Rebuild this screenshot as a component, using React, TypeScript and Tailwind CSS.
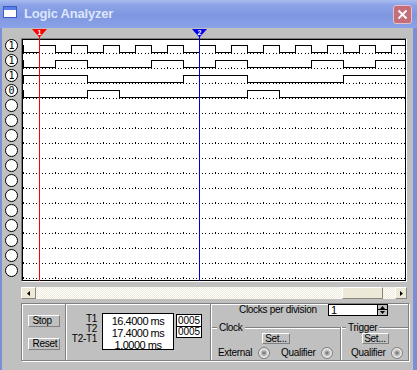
import React from "react";

// high intervals per active channel, in page x (interior runs 23..405)
const HIGHS: [number, number][][] = [
  Array.from({ length: 12 }, (_, k) => [39 + 32 * k, Math.min(55 + 32 * k, 405)] as [number, number]),
  [[55, 87], [151, 183], [215, 247], [311, 343], [375, 405]],
  [[23, 87], [183, 247], [343, 405]],
  [[87, 119], [247, 279]],
];

const VALUES = ["1", "1", "1", "0"];

const L = 23;
const R = 405;

function Trace({ row, highs }: { row: number; highs: [number, number][] }) {
  const hy = 5 + row * 15;
  const ly = 12 + row * 15;
  const lows: [number, number][] = [];
  let x = L;
  for (const [a, b] of highs) {
    if (a > x) lows.push([x, a]);
    x = b;
  }
  if (x < R) lows.push([x, R]);
  const edges = highs.flatMap(([a, b]) => [a, b]).filter((e) => e > L && e < R);

  return (
    <g fill="#000">
      <rect x={0} y={hy} width={1} height={ly - hy + 1} />
      {highs.map(([a, b], i) => (
        <rect key={"h" + i} x={a - L} y={hy} width={b - a + 1} height={1} />
      ))}
      {lows.map(([a, b], i) => (
        <rect key={"l" + i} x={a - L} y={ly} width={b - a + 1} height={1} />
      ))}
      {edges.map((e, i) => (
        <rect key={"e" + i} x={e - L} y={hy} width={1} height={ly - hy + 1} />
      ))}
    </g>
  );
}

function Marker({ color, label }: { color: string; label: string }) {
  return (
    <svg width="15" height="9" viewBox="0 0 15 9">
      <polygon points="0,0 15,0 7.5,8.5" fill={color} />
      <text x="7.5" y="6" textAnchor="middle" fontSize="7" fontWeight="bold" fill="#fff" fontFamily="Liberation Sans, Arial, sans-serif">
        {label}
      </text>
    </svg>
  );
}

function Radio() {
  return (
    <svg width="12" height="12" viewBox="0 0 12 12" className="shrink-0">
      <circle cx="6" cy="6" r="5.5" fill="#c0c0c0" stroke="#808080" />
      <circle cx="6" cy="6" r="4.2" fill="#c0c0c0" stroke="#ffffff" />
      <circle cx="6" cy="6" r="1.8" fill="#808080" />
    </svg>
  );
}

function Btn({ children, className }: { children: React.ReactNode; className: string }) {
  return (
    <div
      className={
        "flex items-center whitespace-nowrap bg-[#c0c0c0] border border-t-white border-l-white border-r-[#808080] border-b-[#808080] text-[10px] leading-none text-black " +
        className
      }
    >
      {children}
    </div>
  );
}

function TitleBar() {
  return (
    <div className="h-[28px] flex items-center bg-[linear-gradient(to_bottom,#aabcf0_0%,#8ca3e7_18%,#7e97e0_55%,#8aa2e7_100%)]">
      <svg width="14" height="12" viewBox="0 0 14 12" className="ml-[3px] self-start mt-[6px]">
        <rect x="0.5" y="0.5" width="13" height="11" fill="#fff" stroke="#3b5cc4" />
        <rect x="1" y="1" width="12" height="3" fill="#5a7fe6" />
      </svg>
      <span className="ml-[7px] text-[13px] font-bold text-[#dde6fb] tracking-[-0.2px]">Logic Analyzer</span>
      <div className="ml-auto mr-[5px] w-[19px] h-[19px] rounded-[3px] border border-[#e6c2c8] bg-[#c46e7b] flex items-center justify-center">
        <svg width="11" height="11" viewBox="0 0 11 11">
          <path d="M1.5 1.5 L9.5 9.5 M9.5 1.5 L1.5 9.5" stroke="#fff" strokeWidth="1.8" />
        </svg>
      </div>
    </div>
  );
}

export default function App() {
  return (
    <div className="w-[417px] h-[370px] overflow-hidden flex flex-col bg-[#c0c0c0] font-['Liberation_Sans',Arial,sans-serif] text-black">
      <TitleBar />
      <div className="flex-1 flex flex-col border-l-2 border-r-4 border-[#7b8ed8]">
        {/* channels + waveform */}
        <div className="flex">
          <div className="w-[19px] pt-[10px] flex flex-col">
            {Array.from({ length: 16 }, (_, i) => (
              <div key={i} className="h-[15px] flex items-center justify-center">
                <div className="w-[13px] h-[13px] rounded-full border border-black bg-white flex items-center justify-center text-[10px] leading-none font-['DejaVu_Sans_Mono',monospace]">
                  {VALUES[i] ?? ""}
                </div>
              </div>
            ))}
          </div>

          <div className="relative w-[386px]">
            <div className="h-[10px]" />
            <div className="h-[244px] border border-t-[#808080] border-l-[#808080] border-r-white border-b-white">
              <div className="h-full border border-black bg-white">
                <svg width="382" height="240" viewBox="0 0 382 240" shapeRendering="crispEdges" className="block">
                  <defs>
                    <pattern id="grid" x="0" y="0" width="16" height="15" patternUnits="userSpaceOnUse">
                      <rect x="0" y="12" width="1" height="2" fill="#000" />
                      <rect x="3" y="13" width="1" height="1" fill="#000" />
                      <rect x="6" y="13" width="1" height="1" fill="#000" />
                      <rect x="10" y="13" width="1" height="1" fill="#000" />
                      <rect x="13" y="13" width="1" height="1" fill="#000" />
                    </pattern>
                  </defs>
                  <rect x="0" y="0" width="382" height="240" fill="url(#grid)" />
                  {HIGHS.map((h, i) => (
                    <Trace key={i} row={i} highs={h} />
                  ))}
                </svg>
              </div>
            </div>

            {/* cursors */}
            <div className="absolute left-[11px] top-[1px]">
              <Marker color="#ff0000" label="1" />
            </div>
            <div className="absolute left-[18px] top-[9px] w-px h-[244px] bg-[#ff0000]" />
            <div className="absolute left-[171px] top-[1px]">
              <Marker color="#0000e8" label="2" />
            </div>
            <div className="absolute left-[178px] top-[9px] w-px h-[244px] bg-[#0000e8]" />
          </div>
        </div>

        {/* scrollbar */}
        <div className="mt-[5px] ml-[19px] w-[386px] h-[12px] flex">
          <div className="w-[15px] h-full bg-[#ece9d8] border border-t-white border-l-white border-r-[#8a877a] border-b-[#8a877a] flex items-center justify-center">
            <svg width="3" height="5" viewBox="0 0 3 5">
              <polygon points="3,0 3,5 0,2.5" fill="#000" />
            </svg>
          </div>
          <div className="flex-1 h-full bg-[repeating-conic-gradient(#ffffff_0%_25%,#ece9d8_0%_50%)] bg-[length:2px_2px] flex">
            <div className="ml-auto mr-[12px] w-[41px] h-full bg-[#ece9d8] border border-t-white border-l-white border-r-[#8a877a] border-b-[#8a877a]" />
          </div>
          <div className="w-[12px] h-full bg-[#ece9d8] border border-t-white border-l-white border-r-[#8a877a] border-b-[#8a877a] flex items-center justify-center">
            <svg width="3" height="5" viewBox="0 0 3 5">
              <polygon points="0,0 0,5 3,2.5" fill="#000" />
            </svg>
          </div>
        </div>

        {/* control panel */}
        <div className="mt-[4px] ml-[19px] w-[388px] h-[58px] border border-[#808080] shadow-[inset_1px_1px_0_#fff,1px_1px_0_#fff] flex text-[10px] tracking-[-0.3px] whitespace-nowrap">
          <div className="w-[43px] flex flex-col items-center pt-[11px] gap-[11px]">
            <Btn className="w-[32px] h-[12px] pl-[4px]">Stop</Btn>
            <Btn className="w-[32px] h-[12px] pl-[4px]">Reset</Btn>
          </div>
          <div className="w-[2px] border-l border-[#808080] bg-white" />

          <div className="w-[143px] flex items-start">
            <div className="w-[30px] pt-[10px] flex flex-col items-end leading-[10px]">
              <span>T1</span>
              <span>T2</span>
              <span>T2-T1</span>
            </div>
            <div className="ml-[5px] mt-[9px] w-[72px] h-[37px] border border-black bg-white flex flex-col items-center pt-[1px] text-[11px] leading-[12px] tracking-[-0.5px]">
              <span>16.4000 ms</span>
              <span>17.4000 ms</span>
              <span>1.0000 ms</span>
            </div>
            <div className="ml-[2px] mt-[10px] w-[26px] h-[24px] border border-black bg-white flex flex-col leading-none tracking-[0px]">
              <div className="h-[11px] flex items-center justify-center">0005</div>
              <div className="h-[11px] border-t border-black flex items-center justify-center">0005</div>
            </div>
          </div>
          <div className="w-[2px] border-l border-[#808080] bg-white" />

          <div className="flex-1 flex flex-col leading-none">
            <div className="h-[16px] flex items-center pl-[27px]">
              <span className="w-[89px]">Clocks per division</span>
              <div className="flex h-[12px] border border-black bg-white">
                <div className="w-[48px] pl-[2px] flex items-center text-[11px]">1</div>
                <div className="w-[10px] border-l border-black flex flex-col">
                  <div className="h-[5px] bg-[#c0c0c0] border-b border-black flex items-center justify-center">
                    <svg width="5" height="3" viewBox="0 0 5 3">
                      <polygon points="0,3 5,3 2.5,0" fill="#000" />
                    </svg>
                  </div>
                  <div className="flex-1 bg-[#c0c0c0] flex items-center justify-center">
                    <svg width="5" height="3" viewBox="0 0 5 3">
                      <polygon points="0,0 5,0 2.5,3" fill="#000" />
                    </svg>
                  </div>
                </div>
              </div>
            </div>

            <div className="mt-[7px] flex-1 flex">
              {/* Clock group */}
              <div className="w-[128px] flex flex-col">
                <div className="h-[10px] flex items-center">
                  <div className="w-[5px] h-[2px] border-t border-[#808080] bg-white" />
                  <span className="px-[2px]">Clock</span>
                  <div className="flex-1 h-[2px] border-t border-[#808080] bg-white" />
                </div>
                <Btn className="self-center w-[28px] h-[11px] justify-center">Set...</Btn>
                <div className="mt-[2px] h-[14px] flex items-center pl-[6px]">
                  <span className="w-[40px]">External</span>
                  <Radio />
                  <span className="ml-[11px] w-[40px]">Qualifier</span>
                  <Radio />
                </div>
              </div>

              <div className="w-[2px] flex flex-col">
                <div className="h-[4px]" />
                <div className="flex-1 border-l border-[#808080] bg-white" />
              </div>

              {/* Trigger group */}
              <div className="flex-1 flex flex-col">
                <div className="h-[10px] flex items-center">
                  <div className="w-[4px] h-[2px] border-t border-[#808080] bg-white" />
                  <span className="px-[2px]">Trigger</span>
                  <div className="flex-1 h-[2px] border-t border-[#808080] bg-white" />
                </div>
                <Btn className="self-center w-[27px] h-[11px] justify-center">Set...</Btn>
                <div className="mt-[2px] h-[14px] flex items-center pl-[9px]">
                  <span className="w-[40px]">Qualifier</span>
                  <Radio />
                </div>
              </div>
            </div>
          </div>
        </div>
      </div>
    </div>
  );
}
